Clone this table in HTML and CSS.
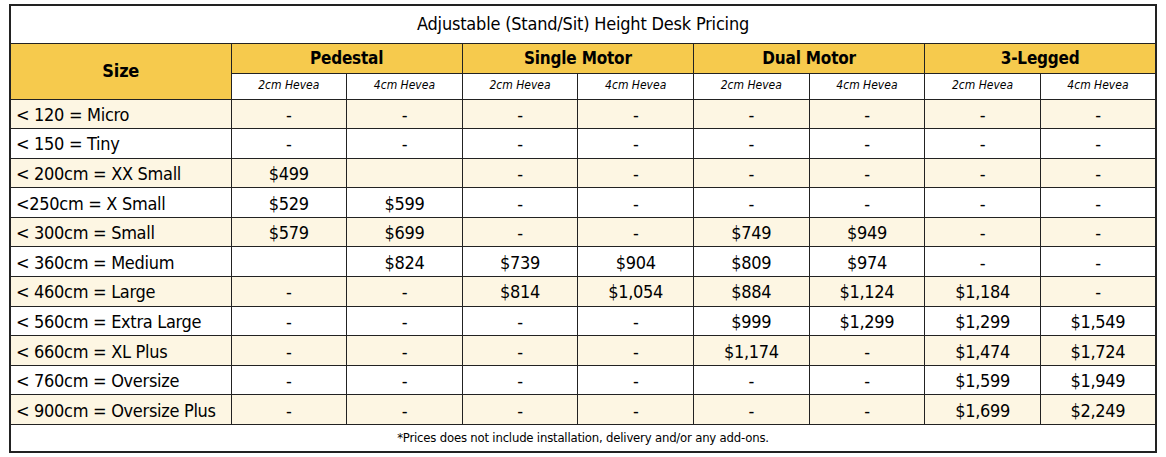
FILE: index.html
```html
<!DOCTYPE html>
<html lang="en">
<head>
<meta charset="utf-8">
<title>Adjustable Height Desk Pricing</title>
<link rel="stylesheet" href="styles.css">
</head>
<body>
<table class="pricing">
  <colgroup>
    <col class="col-size">
    <col><col><col><col><col><col><col><col>
  </colgroup>
  <thead>
    <tr class="title-row">
      <th colspan="9" class="title">Adjustable (Stand/Sit) Height Desk Pricing</th>
    </tr>
    <tr class="group-row">
      <th rowspan="2" class="size-head">Size</th>
      <th colspan="2" class="group">Pedestal</th>
      <th colspan="2" class="group">Single Motor</th>
      <th colspan="2" class="group">Dual Motor</th>
      <th colspan="2" class="group">3-Legged</th>
    </tr>
    <tr class="sub-row">
      <th class="sub">2cm Hevea</th><th class="sub">4cm Hevea</th>
      <th class="sub">2cm Hevea</th><th class="sub">4cm Hevea</th>
      <th class="sub">2cm Hevea</th><th class="sub">4cm Hevea</th>
      <th class="sub">2cm Hevea</th><th class="sub">4cm Hevea</th>
    </tr>
  </thead>
  <tbody>
    <tr class="alt"><td class="size">&lt; 120 = Micro</td><td>-</td><td>-</td><td>-</td><td>-</td><td>-</td><td>-</td><td>-</td><td>-</td></tr>
    <tr><td class="size">&lt; 150 = Tiny</td><td>-</td><td>-</td><td>-</td><td>-</td><td>-</td><td>-</td><td>-</td><td>-</td></tr>
    <tr class="alt"><td class="size">&lt; 200cm = XX Small</td><td>$499</td><td></td><td>-</td><td>-</td><td>-</td><td>-</td><td>-</td><td>-</td></tr>
    <tr><td class="size">&lt;250cm = X Small</td><td>$529</td><td>$599</td><td>-</td><td>-</td><td>-</td><td>-</td><td>-</td><td>-</td></tr>
    <tr class="alt"><td class="size">&lt; 300cm = Small</td><td>$579</td><td>$699</td><td>-</td><td>-</td><td>$749</td><td>$949</td><td>-</td><td>-</td></tr>
    <tr><td class="size">&lt; 360cm = Medium</td><td></td><td>$824</td><td>$739</td><td>$904</td><td>$809</td><td>$974</td><td>-</td><td>-</td></tr>
    <tr class="alt"><td class="size">&lt; 460cm = Large</td><td>-</td><td>-</td><td>$814</td><td>$1,054</td><td>$884</td><td>$1,124</td><td>$1,184</td><td>-</td></tr>
    <tr><td class="size">&lt; 560cm = Extra Large</td><td>-</td><td>-</td><td>-</td><td>-</td><td>$999</td><td>$1,299</td><td>$1,299</td><td>$1,549</td></tr>
    <tr class="alt"><td class="size">&lt; 660cm = XL Plus</td><td>-</td><td>-</td><td>-</td><td>-</td><td>$1,174</td><td>-</td><td>$1,474</td><td>$1,724</td></tr>
    <tr><td class="size">&lt; 760cm = Oversize</td><td>-</td><td>-</td><td>-</td><td>-</td><td>-</td><td>-</td><td>$1,599</td><td>$1,949</td></tr>
    <tr class="alt"><td class="size">&lt; 900cm = Oversize Plus</td><td>-</td><td>-</td><td>-</td><td>-</td><td>-</td><td>-</td><td>$1,699</td><td>$2,249</td></tr>
  </tbody>
  <tfoot>
    <tr class="foot-row">
      <td colspan="9" class="note">*Prices does not include installation, delivery and/or any add-ons.</td>
    </tr>
  </tfoot>
</table>
</body>
</html>
```

FILE: styles.css
```css
html, body {
  margin: 0;
  padding: 0;
  background: #ffffff;
}

body {
  padding: 4px 0 0 9px;
  font-family: "DejaVu Sans Condensed", "Liberation Sans", sans-serif;
  color: #000000;
}

.pricing {
  width: 1148px;
  table-layout: fixed;
  border-collapse: collapse;
  border: 2px solid #222222;
}

.col-size {
  width: 221px;
}

.pricing th,
.pricing td {
  border: 1px solid #222222;
  padding: 0;
  text-align: center;
  vertical-align: middle;
  overflow: hidden;
  white-space: nowrap;
  line-height: 1.1;
}

.title-row {
  height: 38px;
}

.title {
  font-weight: normal;
  font-size: 18px;
  letter-spacing: -0.2px;
  padding-top: 1px;
  background: #ffffff;
}

.group-row {
  height: 30px;
}

.group,
.size-head {
  background: #f6ca4d;
  font-size: 17px;
  font-weight: bold;
  letter-spacing: -0.2px;
}

.size-head {
  font-size: 18px;
}

.sub-row {
  height: 26px;
}

.sub {
  font-size: 12px;
  font-style: italic;
  font-weight: normal;
  background: #ffffff;
}

.pricing tbody tr {
  height: 29.6px;
}

.pricing tbody td {
  font-size: 18px;
  letter-spacing: -0.3px;
  background: #ffffff;
  padding-top: 2px;
}

.pricing tbody tr.alt td {
  background: #fdf6e3;
}

.pricing td.size {
  text-align: left;
  padding-left: 5px;
}

.foot-row {
  height: 27px;
}

.note {
  font-size: 13px;
  letter-spacing: -0.2px;
  background: #ffffff;
}
```
